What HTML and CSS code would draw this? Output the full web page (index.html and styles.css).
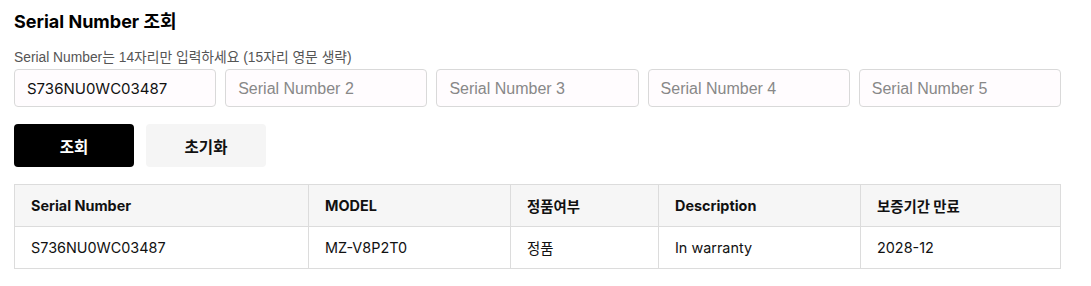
FILE: index.html
```html
<!DOCTYPE html>
<html lang="ko">
<head>
    <meta charset="UTF-8">
    <meta name="viewport" content="width=device-width, initial-scale=1.0">
    <title>Serial Number 조회</title>
    <link rel="stylesheet" href="styles.css">
</head>
<body>
    <div class="wrap">
        <h2 class="title">Serial Number 조회</h2>
        <p class="hint">Serial Number는 14자리만 입력하세요 (15자리 영문 생략)</p>

        <div class="inputs">
            <input type="text" class="sn" value="S736NU0WC03487" placeholder="Serial Number 1">
            <input type="text" class="sn" placeholder="Serial Number 2">
            <input type="text" class="sn" placeholder="Serial Number 3">
            <input type="text" class="sn" placeholder="Serial Number 4">
            <input type="text" class="sn" placeholder="Serial Number 5">
        </div>

        <div class="actions">
            <button class="btn btn-search">조회</button>
            <button class="btn btn-reset">초기화</button>
        </div>

        <table class="result">
            <colgroup>
                <col class="c1">
                <col class="c2">
                <col class="c3">
                <col class="c4">
                <col class="c5">
            </colgroup>
            <thead>
                <tr>
                    <th>Serial Number</th>
                    <th>MODEL</th>
                    <th>정품여부</th>
                    <th>Description</th>
                    <th>보증기간 만료</th>
                </tr>
            </thead>
            <tbody>
                <tr>
                    <td>S736NU0WC03487</td>
                    <td>MZ-V8P2T0</td>
                    <td>정품</td>
                    <td>In warranty</td>
                    <td>2028-12</td>
                </tr>
            </tbody>
        </table>
    </div>
</body>
</html>
```

FILE: styles.css
```css
* {
    margin: 0;
    padding: 0;
    box-sizing: border-box;
}

body {
    font-family: Inter, "Noto Sans CJK KR", sans-serif;
    color: #111;
    background: #fff;
}

.wrap {
    width: 1047px;
    margin-left: 14px;
    padding-top: 10px;
}

.title {
    font-size: 18px;
    font-weight: 700;
    line-height: 24px;
    color: #000;
}

.hint {
    margin-top: 16px;
    font-family: "Liberation Sans", "Noto Sans CJK KR", sans-serif;
    font-size: 13.8px;
    line-height: 16px;
    color: #555;
}

.inputs {
    display: grid;
    grid-template-columns: repeat(5, minmax(0, 1fr));
    gap: 9px;
    margin-top: 3px;
}

.sn {
    width: 100%;
    height: 38px;
    padding: 0 12px;
    border: 1px solid #d9d9d9;
    border-radius: 4px;
    background: #fffcfe;
    font-family: Inter, "Noto Sans CJK KR", sans-serif;
    font-size: 15px;
    color: #111;
    outline: none;
}

.sn::placeholder {
    font-family: "Liberation Sans", Arial, sans-serif;
    font-size: 16px;
    color: #888;
}

.actions {
    display: flex;
    gap: 12px;
    margin-top: 17px;
}

.btn {
    width: 120px;
    height: 43px;
    border: none;
    border-radius: 4px;
    font-family: Inter, "Noto Sans CJK KR", sans-serif;
    font-size: 15.5px;
    font-weight: 700;
    cursor: pointer;
}

.btn-search {
    background: #000;
    color: #fff;
}

.btn-reset {
    background: #f5f5f5;
    color: #111;
}

.result {
    width: 100%;
    margin-top: 17px;
    border-collapse: collapse;
    font-size: 14.4px;
}

.c1 { width: 294px; }
.c2 { width: 202px; }
.c3 { width: 148px; }
.c4 { width: 202px; }

.result th,
.result td {
    height: 42px;
    padding: 0 16px;
    border: 1px solid #dcdcdc;
    text-align: left;
}

.result tbody td {
    height: 42px;
}

.result th {
    background: #f6f6f6;
    font-weight: 700;
}

.result td {
    font-weight: 400;
}
```
